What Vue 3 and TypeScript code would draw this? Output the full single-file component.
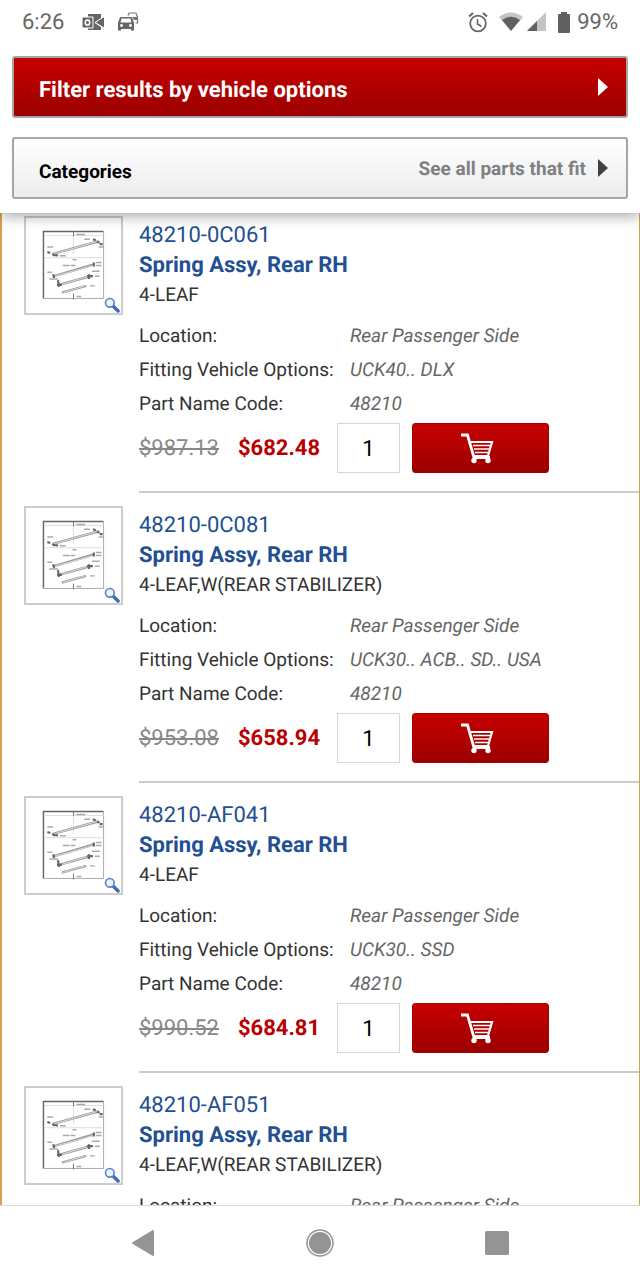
<script setup lang="ts">
import { ref } from 'vue'

interface Part {
  number: string
  name: string
  description: string
  location: string
  options: string
  code: string
  listPrice: string
  price: string
  quantity: string
}

const base = { name: 'Spring Assy, Rear RH', location: 'Rear Passenger Side', code: '48210', quantity: '1' }

const parts = ref<Part[]>([
  { ...base, number: '48210-0C061', description: '4-LEAF', options: 'UCK40.. DLX', listPrice: '$987.13', price: '$682.48' },
  { ...base, number: '48210-0C081', description: '4-LEAF,W(REAR STABILIZER)', options: 'UCK30.. ACB.. SD.. USA', listPrice: '$953.08', price: '$658.94' },
  { ...base, number: '48210-AF041', description: '4-LEAF', options: 'UCK30.. SSD', listPrice: '$990.52', price: '$684.81' },
  { ...base, number: '48210-AF051', description: '4-LEAF,W(REAR STABILIZER)', options: '', listPrice: '', price: '' },
])
</script>

<template>
  <div class="screen">
    <header class="top">
      <div class="status">
        <span class="clock">6:26</span>
        <svg class="mail" width="22" height="18" viewBox="0 0 22 18" aria-hidden="true">
          <path d="M6 1h13v5l-6 4 6 4v3H6z" fill="#666" />
          <path d="M13 9.500l9-5.500v10.500z" fill="#666" />
          <path d="M22 3.500l-9 6 9 5.500" stroke="#fff" stroke-width="1" fill="none" />
          <path d="M0 4h11v11H0z" fill="#666" stroke="#fff" stroke-width="1" />
          <ellipse cx="5.500" cy="9.500" rx="2.200" ry="2.600" fill="none" stroke="#fff" stroke-width="1.500" />
        </svg>
        <svg class="car" width="22" height="20" viewBox="0 0 22 20" aria-hidden="true">
          <path d="M11 3.500l1-2.500h7l1.500 4v6h-2" fill="none" stroke="#777" stroke-width="1.200" />
          <path d="M15 5h5v3h-3z" fill="#777" />
          <path d="M4 5h10q1 0 1.500 1.500L17 11v7.500h-3V17H4v1.500H1V11l1.500-4.500Q3 5 4 5z" fill="#666" />
          <path d="M4.500 6.500h9L14.500 10.500h-11z" fill="#fff" />
          <circle cx="4.500" cy="13.500" r="1.400" fill="#fff" />
          <circle cx="13.500" cy="13.500" r="1.400" fill="#fff" />
        </svg>
        <span class="spacer"></span>
        <svg class="alarm" width="20" height="21" viewBox="0 0 20 21" fill="none" stroke="#666" aria-hidden="true">
          <circle cx="10" cy="11.500" r="7.800" stroke-width="1.800" />
          <path d="M9.500 7v5l4 2.500" stroke-width="1.600" />
          <path d="M1 4.500L5 1M15 1l4 3.500" stroke-width="2.200" />
        </svg>
        <svg class="wifi" width="24" height="20" viewBox="0 0 24 20" aria-hidden="true">
          <path d="M0 5Q12-4 24 5L12 19z" fill="#c4c4c4" />
          <path d="M3 8Q12 1.500 21 8L12 19z" fill="#606060" />
        </svg>
        <svg class="signal" width="19" height="20" viewBox="0 0 19 20" aria-hidden="true">
          <path d="M19 0v19H0z" fill="#c4c4c4" />
          <path d="M10 9v10H0z" fill="#606060" />
        </svg>
        <svg class="battery" width="12" height="21" viewBox="0 0 12 21" aria-hidden="true">
          <path d="M3 0h6v2h2q1 0 1 1v17q0 1-1 1H1q-1 0-1-1V3q0-1 1-1h2z" fill="#606060" />
        </svg>
        <span class="percent">99%</span>
      </div>
      <button class="bar filter" type="button">
        <span class="bar-title">Filter results by vehicle options</span>
        <svg class="arrow" width="10" height="18" viewBox="0 0 10 18" aria-hidden="true"><path d="M0 0l10 9-10 9z" fill="#fff" /></svg>
      </button>
      <button class="bar categories" type="button">
        <span class="bar-title">Categories</span>
        <span class="see-all">See all parts that fit</span>
        <svg class="arrow" width="10" height="18" viewBox="0 0 10 18" aria-hidden="true"><path d="M0 0l10 9-10 9z" fill="#404040" /></svg>
      </button>
    </header>

    <main class="results">
      <article v-for="part in parts" :key="part.number" class="part">
        <button class="thumb" type="button" :aria-label="`Enlarge diagram of ${part.number}`">
          <svg width="98" height="98" viewBox="0 0 98 98" fill="none" aria-hidden="true">
            <path d="M18 83V14h62" stroke="#666" stroke-width="1.500" />
            <path d="M80 14v69H18" stroke="#aaa" />
            <path d="M19 18h61M19 41h61M49 20v17" stroke="#ddd" stroke-width="1" />
            <g stroke="#999" stroke-width="2.600">
              <path d="M28 37l47-13" />
              <path d="M29 60l41-12M34 69l32-9M37 77l25-7" />
            </g>
            <g stroke="#ddd" stroke-width="1">
              <path d="M29 37l45-13M30 60l39-11M35 69l30-9M38 77l23-7" />
            </g>
            <path d="M22 35l3 1m2 1l3 2m0-1l3 1M69 22l3 1m1 2l3 0m0 2l3 0M28 58l1 4M70 46v4M33 64l1 7M65 58v5M32 69h5M63 60h6" stroke="#666" stroke-width="2.200" />
            <path d="M52 17h9M60 22h6M22 30h6M35 39h6M75 30h5M48 43h4M38 49h7M46 49h5M72 46h6M72 49h6M22 56h5M24 63h9M68 55h8M71 60h5M66 70h5M52 81h5" stroke="#aaa" stroke-width="1.500" />
            <path d="M49 78v6M49 14v5" stroke="#777" />
            <path d="M90 91l5 5" stroke="#416bb8" stroke-width="3.500" stroke-linecap="round" />
            <circle cx="86.500" cy="87.500" r="4.500" fill="#eaf4fd" stroke="#5b84c8" stroke-width="1.700" />
          </svg>
        </button>
        <div class="info">
          <a class="number" href="#">{{ part.number }}</a>
          <a class="name" href="#">{{ part.name }}</a>
          <p class="description">{{ part.description }}</p>
          <dl class="facts">
            <dt>Location:</dt>
            <dd>{{ part.location }}</dd>
            <template v-if="part.options">
              <dt>Fitting Vehicle Options:</dt>
              <dd>{{ part.options }}</dd>
              <dt>Part Name Code:</dt>
              <dd>{{ part.code }}</dd>
            </template>
          </dl>
          <div v-if="part.price" class="buy">
            <s class="list-price">{{ part.listPrice }}</s>
            <strong class="price">{{ part.price }}</strong>
            <input v-model="part.quantity" class="quantity" type="text" inputmode="numeric" :aria-label="`Quantity of ${part.number}`" />
            <button class="cart" type="button" :aria-label="`Add ${part.number} to cart`">
              <svg width="34" height="32" viewBox="0 0 34 32" fill="none" stroke="#fff" aria-hidden="true">
                <path d="M1 3h6.500L14 25.500h16" stroke-width="2.800" />
                <path d="M11 10h21l-4 14H14" stroke-width="2.200" />
                <path d="M13 13.500h17M14 17h15M15 20.500h13" stroke-width="1.600" />
                <circle cx="14" cy="28.500" r="2.700" fill="#fff" stroke="none" />
                <circle cx="28" cy="28.500" r="2.700" fill="#fff" stroke="none" />
              </svg>
            </button>
          </div>
        </div>
      </article>
    </main>

    <nav class="system">
      <button type="button" aria-label="Back">
        <svg width="24" height="32" viewBox="0 0 24 32"><path d="M22 4v24L2 16z" fill="#949494" stroke="#949494" stroke-width="2" stroke-linejoin="round" /></svg>
      </button>
      <button type="button" aria-label="Home">
        <svg width="30" height="30" viewBox="0 0 30 30"><circle cx="15" cy="15" r="13" fill="none" stroke="#949494" stroke-width="1.500" /><circle cx="15" cy="15" r="11" fill="#949494" /></svg>
      </button>
      <button type="button" aria-label="Overview">
        <svg width="24" height="24" viewBox="0 0 24 24"><rect width="24" height="24" rx="2" fill="#949494" /></svg>
      </button>
    </nav>
  </div>
</template>

<style>
body {
  margin: 0;
}
</style>

<style scoped>
* {
  box-sizing: border-box;
}

.screen {
  display: flex;
  flex-direction: column;
  height: 100vh;
  overflow: hidden;
  background: #fff;
  color: #333;
  font-family: Roboto, "Liberation Sans", sans-serif;
  font-size: 19px;
  text-rendering: geometricPrecision;
}

button {
  font: inherit;
  text-rendering: inherit;
  cursor: pointer;
}

svg {
  display: block;
  flex: none;
}

.top {
  position: relative;
  z-index: 1;
  flex: none;
  padding: 0 12px 14px;
  background: #fff;
  box-shadow: 0 2px 14px rgba(0, 0, 0, 0.4);
}

.status {
  display: flex;
  align-items: center;
  height: 44px;
  margin-bottom: 12px;
  padding: 0 10px;
  color: #666;
  font-size: 22px;
}

.mail {
  margin-left: 18px;
}

.car {
  margin-left: 13px;
}

.spacer {
  flex: 1;
}

.wifi {
  margin-left: 11px;
}

.signal {
  margin-left: 4px;
}

.battery {
  margin: 0 7px 0 12px;
}

.bar {
  display: flex;
  align-items: center;
  width: 100%;
  height: 62px;
  padding: 0 18px 0 25px;
  border: 2px solid #a6a6a6;
  border-radius: 3px;
  font-weight: 700;
  text-align: left;
}

.bar-title {
  flex: 1;
  padding-top: 6px;
}

.filter {
  margin-bottom: 19px;
  background: linear-gradient(#c60000, #9c0000);
  color: #fff;
  font-size: 22px;
}

.categories {
  background: linear-gradient(#fff, #ececec);
  color: #000;
}

.see-all {
  margin-right: 12px;
  color: #808080;
}

.results {
  flex: 1;
  min-height: 0;
  overflow: hidden;
  border-right: 1px solid #d6a04a;
  border-left: 2px solid #d6a04a;
}

.part {
  display: flex;
  align-items: flex-start;
  gap: 16px;
  padding-left: 22px;
}

.part:first-child {
  margin-top: -10px;
}

.thumb {
  flex: none;
  margin-top: 13px;
  padding: 0;
  border: 2px solid #ccc;
  background: #fff;
}

.thumb svg {
  width: 95px;
  height: 95px;
}

.info {
  flex: 1;
  padding: 18px 0 18px;
  border-bottom: 2px solid #ccc;
}

.number,
.name {
  display: block;
  color: #234f93;
  font-size: 22px;
  line-height: 30px;
  text-decoration: none;
}

.name {
  font-weight: 700;
}

.description {
  margin: 0 0 10px;
  line-height: 28px;
}

.facts {
  display: grid;
  grid-template-columns: 211px 1fr;
  margin: 0 0 2px;
  line-height: 34px;
}

.facts dd {
  margin: 0;
  color: #666;
  font-style: italic;
}

.buy {
  display: flex;
  align-items: center;
  height: 50px;
  font-size: 22px;
}

.list-price {
  width: 99px;
  color: #888;
}

.price {
  width: 99px;
  color: #b80000;
}

.quantity {
  width: 63px;
  height: 50px;
  padding: 0;
  border: 1px solid #d6d6d6;
  background: #fff;
  color: #000;
  font: inherit;
  text-align: center;
}

.cart {
  display: flex;
  align-items: center;
  justify-content: center;
  width: 137px;
  height: 50px;
  margin-left: 12px;
  padding: 0 7px 0 0;
  border: 1px solid #a80000;
  border-radius: 3px;
  background: linear-gradient(#c60000, #9c0000);
}

.system {
  display: flex;
  flex: none;
  align-items: center;
  justify-content: center;
  gap: 147px;
  height: 75px;
  border-top: 1px solid #d8d8d8;
  background: #fff;
}

.system button {
  display: flex;
  align-items: center;
  justify-content: center;
  width: 30px;
  height: 32px;
  padding: 0;
  border: 0;
  background: none;
}
</style>
